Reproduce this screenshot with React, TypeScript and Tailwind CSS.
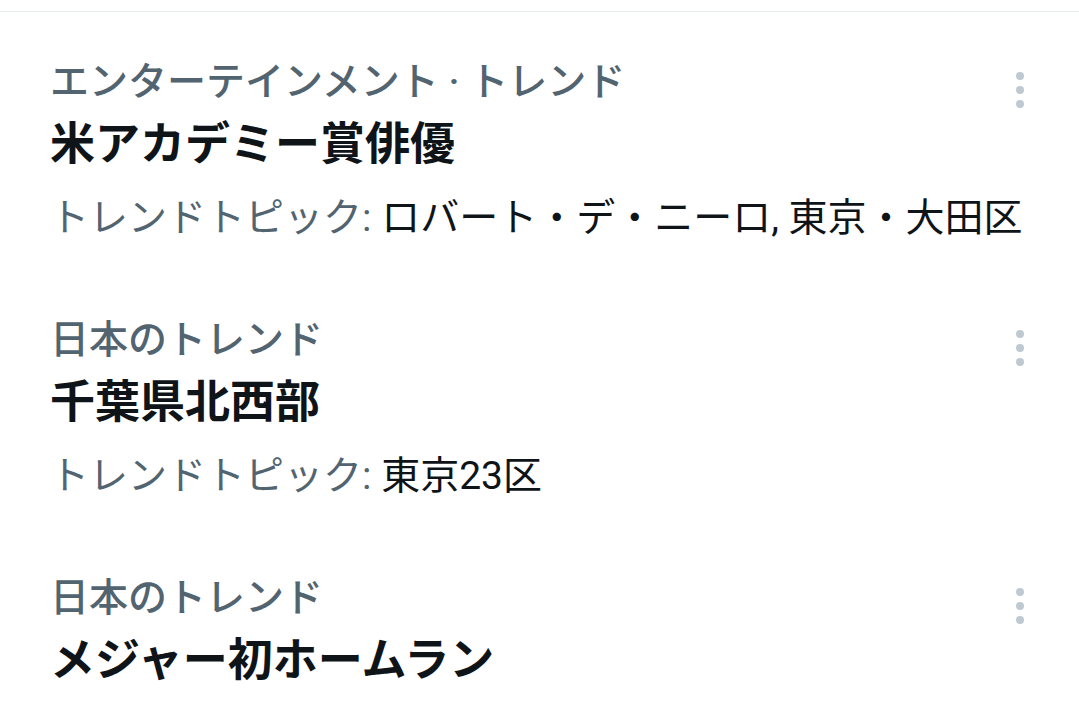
const FONT = "font-['Roboto','Noto_Sans_CJK_JP',sans-serif]";

interface Trend {
  category: string;
  title: string;
  topics?: string;
}

const TRENDS: Trend[] = [
  {
    category: "エンターテインメント · トレンド",
    title: "米アカデミー賞俳優",
    topics: "ロバート・デ・ニーロ, 東京・大田区",
  },
  {
    category: "日本のトレンド",
    title: "千葉県北西部",
    topics: "東京23区",
  },
  {
    category: "日本のトレンド",
    title: "メジャー初ホームラン",
  },
];

function MoreIcon() {
  return (
    <svg width="12" height="36" viewBox="0 0 12 36" className="mt-[19px] shrink-0" aria-hidden>
      <circle cx="6" cy="4" r="4" fill="#bfc9d1" />
      <circle cx="6" cy="18" r="4" fill="#bfc9d1" />
      <circle cx="6" cy="32" r="4" fill="#bfc9d1" />
    </svg>
  );
}

function TrendItem({ trend }: { trend: Trend }) {
  return (
    <article className="flex flex-col pb-[54px] pl-[50px]">
      <div className="flex items-start justify-between pr-[53px]">
        <span className="text-[39px] font-medium leading-[58px] text-[#536471]">
          {trend.category}
        </span>
        <MoreIcon />
      </div>
      <h3 className="text-[45px] font-bold leading-[68px] text-[#0f1419]">{trend.title}</h3>
      {trend.topics && (
        <p className="whitespace-nowrap text-[39px] leading-[78px] text-[#0f1419]">
          <span className="text-[#536471]">トレンドトピック:</span> {trend.topics}
        </p>
      )}
    </article>
  );
}

export default function App() {
  return (
    <div className={`h-[722px] w-[1079px] overflow-hidden bg-white ${FONT}`}>
      <div className="h-[11px]" />
      <div className="border-t border-[#e7ecf0] pt-[41px]">
        {TRENDS.map((t, i) => (
          <TrendItem key={i} trend={t} />
        ))}
      </div>
    </div>
  );
}
